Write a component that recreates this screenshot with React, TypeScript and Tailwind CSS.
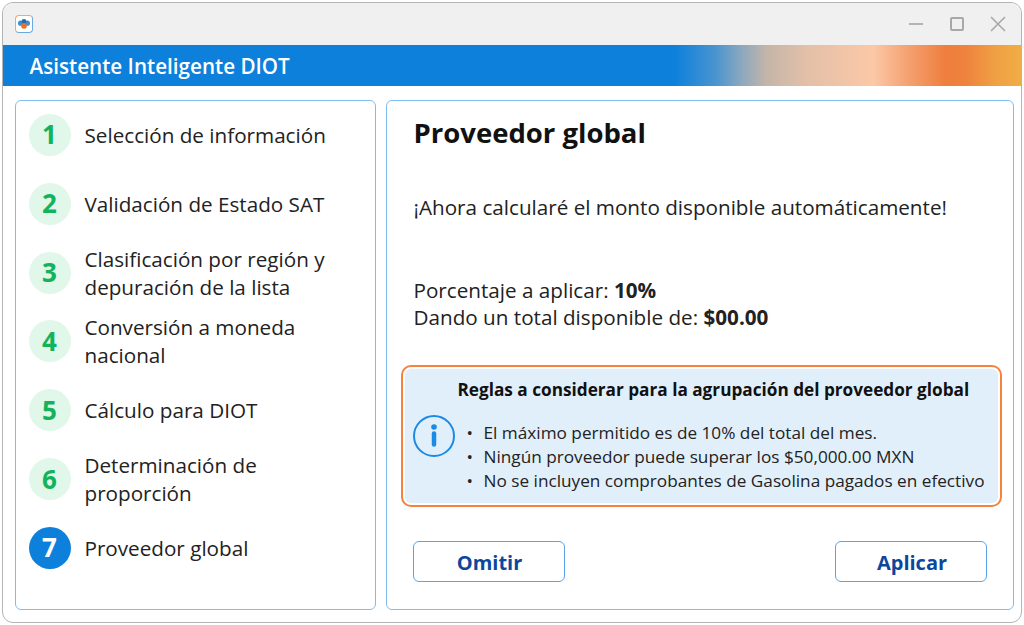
const steps = [
  { n: 1, label: ['Selección de información'] },
  { n: 2, label: ['Validación de Estado SAT'] },
  { n: 3, label: ['Clasificación por región y', 'depuración de la lista'] },
  { n: 4, label: ['Conversión a moneda', 'nacional'] },
  { n: 5, label: ['Cálculo para DIOT'] },
  { n: 6, label: ['Determinación de', 'proporción'] },
  { n: 7, label: ['Proveedor global'], active: true },
];

const rules = [
  'El máximo permitido es de 10% del total del mes.',
  'Ningún proveedor puede superar los $50,000.00 MXN',
  'No se incluyen comprobantes de Gasolina pagados en efectivo',
];

function AppLogo() {
  return (
    <div className="flex h-[18px] w-[18px] items-center justify-center rounded-[4px] border border-l-[#f5a56e] border-t-[#f5a56e] border-r-[#6aa8e0] border-b-[#6aa8e0] bg-white">
      <svg width="14" height="14" viewBox="0 0 14 14">
        <circle cx="3.6" cy="6.2" r="2.6" fill="#3c8fd0" />
        <circle cx="10.4" cy="6.2" r="2.6" fill="#3c8fd0" />
        <circle cx="7" cy="4.4" r="2.4" fill="#1f6fb0" />
        <circle cx="7" cy="9" r="2.8" fill="#f26f21" />
      </svg>
    </div>
  );
}

export default function App() {
  return (
    <div className="h-[625px] w-[1024px] bg-white pl-[2px] pt-[2px] font-['Open_Sans',sans-serif] text-[#222]">
      <div className="flex h-[621px] w-[1020px] flex-col overflow-hidden rounded-[11px] border-[1.5px] border-[#b4b4b4]">
        <div className="flex h-[41.5px] shrink-0 items-center justify-between bg-[#f0f0f0] pl-[11.5px] pr-[15px]">
          <AppLogo />
          <div className="flex items-center gap-[26px]">
            <div className="mr-[1px] h-[2px] w-[14px] bg-[#b4b4b4]" />
            <div className="h-[14px] w-[14px] rounded-[2px] border-2 border-[#a8a8a8]" />
            <svg width="16" height="16" viewBox="0 0 16 16" fill="none" stroke="#a8a8a8" strokeWidth="1.6">
              <path d="M1 1 L15 15 M15 1 L1 15" />
            </svg>
          </div>
        </div>
        <div className="flex h-[41px] shrink-0 items-center bg-[linear-gradient(90deg,#0d80dc_0,#0d80dc_66%,#4a94cf_70%,#8aa8c0_72.5%,#c4b5a8_75%,#e3c0a8_79%,#fcc8a6_85.5%,#f5a070_89%,#ee7f3e_92.5%,#ee823e_94.5%,#f0a044_97.5%,#f0ad45_100%)] pl-[26.5px] pt-[2px] text-[20.65px] font-semibold text-white">
          Asistente Inteligente DIOT
        </div>
        <div className="flex flex-1 gap-[10px] pb-[12px] pl-[11.5px] pr-[7px] pt-[14px]">
          <div className="w-[361px] rounded-[6px] border border-[#7fbcf0] px-[13px] pt-[13.4px]">
            <div className="flex flex-col">
              {steps.map((s) => (
                <div key={s.n} className="flex h-[68.83px] items-start gap-[14px]">
                  <div
                    className={
                      s.active
                        ? 'flex h-[42px] w-[42px] shrink-0 items-center justify-center rounded-full bg-[#0d80dc] text-[26px] font-bold text-white'
                        : 'flex h-[42px] w-[42px] shrink-0 items-center justify-center rounded-full bg-[#e0f7ea] text-[26px] font-bold text-[#12b35a]'
                    }
                  >
                    {s.n}
                  </div>
                  <div className="flex h-[42px] flex-col justify-center whitespace-nowrap text-[20.67px] leading-[28px]">
                    {s.label.map((l) => (
                      <div key={l}>{l}</div>
                    ))}
                  </div>
                </div>
              ))}
            </div>
          </div>
          <div className="flex flex-1 flex-col rounded-[6px] border border-[#7fbcf0] pl-[27px] pr-[11px]">
            <h1 className="mt-[12px] text-[27.5px] font-bold leading-[40px] text-[#111]">Proveedor global</h1>
            <p className="mt-[40px] text-[20.67px] leading-[28px]">¡Ahora calcularé el monto disponible automáticamente!</p>
            <p className="mt-[56px] text-[20.67px] leading-[27px]">
              Porcentaje a aplicar: <b>10%</b>
              <br />
              Dando un total disponible de: <b>$00.00</b>
            </p>
            <div className="-ml-[13px] mt-[34px] h-[142px] w-[601px] rounded-[10px] border-2 border-[#f58240] bg-white p-[2px]">
              <div className="h-full rounded-[6px] bg-[#e1effb]">
                <div className="pl-[53px] pt-[8px] text-[17.2px] font-bold leading-[26px] text-[#111]">
                  Reglas a considerar para la agrupación del proveedor global
                </div>
                <div className="mt-[12px] flex items-start pl-[8px]">
                  <svg width="42" height="42" viewBox="0 0 42 42" fill="none" className="shrink-0">
                    <circle cx="21" cy="21" r="20" stroke="#1a8ae6" strokeWidth="2" />
                    <circle cx="21" cy="12" r="2.8" fill="#1a8ae6" />
                    <path d="M21 18.5 V29.5" stroke="#1a8ae6" strokeWidth="4.5" strokeLinecap="round" />
                  </svg>
                  <ul className="ml-[12px] mt-[6px] text-[17.2px] leading-[24px]">
                    {rules.map((r) => (
                      <li key={r} className="flex whitespace-nowrap">
                        <span className="w-[17px]">•</span>
                        {r}
                      </li>
                    ))}
                  </ul>
                </div>
              </div>
            </div>
            <div className="-ml-[1px] mt-[34px] flex justify-between pr-[15px]">
              <button className="h-[41px] w-[152px] rounded-[6px] border border-[#5aa5e8] pl-[2px] pt-[3px] text-[20px] font-bold text-[#0b479c]">Omitir</button>
              <button className="h-[41px] w-[152px] rounded-[6px] border border-[#5aa5e8] pl-[2px] pt-[3px] text-[20px] font-bold text-[#0b479c]">Aplicar</button>
            </div>
          </div>
        </div>
      </div>
    </div>
  );
}
